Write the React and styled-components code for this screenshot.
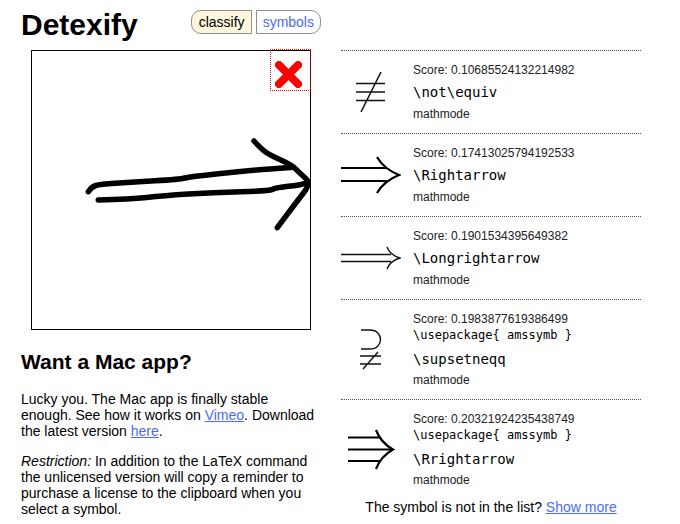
import React from "react";
import styled, { createGlobalStyle } from "styled-components";

const GlobalStyle = createGlobalStyle`
  html, body { margin: 0; padding: 0; background: #fff; }
  body { font-family: "Liberation Sans", Arial, sans-serif; color: #000; }
`;

const results = [
  { score: "0.10685524132214982", command: "\\not\\equiv", symbol: "notequiv", height: 83 },
  { score: "0.17413025794192533", command: "\\Rightarrow", symbol: "rightarrow", height: 83 },
  { score: "0.1901534395649382", command: "\\Longrightarrow", symbol: "longrightarrow", height: 83 },
  { score: "0.1983877619386499", pkg: "\\usepackage{ amssymb }", command: "\\supsetneqq", symbol: "supsetneqq", height: 100 },
  { score: "0.20321924235438749", pkg: "\\usepackage{ amssymb }", command: "\\Rrightarrow", symbol: "rrightarrow", height: 100 },
];

// hand drawn strokes on the canvas
const strokes = [
  [[56.3, 140.7], [59.7, 135.7], [68, 133.3], [98, 131.3], [148, 128.3], [158, 125.7], [214.7, 119.7], [261.3, 116.3]],
  [[66.3, 149], [98, 148.3], [131.3, 144.7], [181.3, 141.3], [236.3, 140], [244.7, 136.7], [268, 134], [279, 130.7]],
  [[222, 90], [229.7, 98.3], [238, 104], [259.7, 114], [268, 122.3], [279, 132.3], [264.7, 150.7], [245.3, 176.7]],
];

const smoothPath = (points) => {
  let d = `M${points[0][0]} ${points[0][1]}`;
  for (let i = 1; i < points.length - 1; i++) {
    const midX = (points[i][0] + points[i + 1][0]) / 2;
    const midY = (points[i][1] + points[i + 1][1]) / 2;
    d += `Q${points[i][0]} ${points[i][1]} ${midX} ${midY}`;
  }
  const last = points[points.length - 1];
  return `${d}L${last[0]} ${last[1]}`;
};

const symbols = {
  notequiv: (
    <svg width="30" height="40" viewBox="0 0 30 40">
      <path d="M0 11.500H29M0 20H29M0 28.500H29M25 0L5 40" fill="none" stroke="#111" strokeWidth="1.500" />
    </svg>
  ),
  rightarrow: (
    <svg width="60" height="38" viewBox="0 0 60 38">
      <path d="M0 12H46M0 25H46" fill="none" stroke="#000" strokeWidth="2" />
      <path d="M36 1C40 8 48 15 58 19C48 23 40 30 36 37" fill="none" stroke="#000" strokeWidth="2.200" />
    </svg>
  ),
  longrightarrow: (
    <svg width="60" height="24" viewBox="0 0 60 24">
      <path d="M0 8.500H50M0 15.500H50" fill="none" stroke="#111" strokeWidth="1.400" />
      <path d="M46 1C48 6 52 10 59 12C52 14 48 18 46 23" fill="none" stroke="#111" strokeWidth="1.400" />
    </svg>
  ),
  supsetneqq: (
    <svg width="22" height="41" viewBox="0 0 22 41">
      <path d="M1 1H10C17 1 20.500 6 20.500 10.500C20.500 15 17 20 10 20H1M0 27H21M0 35H21M18 23L3 40" fill="none" stroke="#111" strokeWidth="1.400" />
    </svg>
  ),
  rrightarrow: (
    <svg width="47" height="41" viewBox="0 0 47 41">
      <path d="M0 8.500H32M0 20.500H43M0 32H32" fill="none" stroke="#000" strokeWidth="2" />
      <path d="M28 1C31 9 37 16 45 20.500C37 25 31 32 28 40" fill="none" stroke="#000" strokeWidth="2.200" />
    </svg>
  ),
};

function App() {
  return (
    <>
      <GlobalStyle />
      <Page>
        <LeftColumn>
          <Header>
            <Title>Detexify</Title>
            <Tabs>
              <Tab $active $side="left">classify</Tab>
              <Tab $side="right">symbols</Tab>
            </Tabs>
          </Header>
          <Canvas>
            <svg width="278" height="278" viewBox="0 0 278 278">
              {strokes.map((points, i) => (
                <path
                  key={i}
                  d={smoothPath(points)}
                  fill="none"
                  stroke="#000"
                  strokeWidth="5.500"
                  strokeLinecap="round"
                  strokeLinejoin="round"
                />
              ))}
            </svg>
            <ClearButton>
              <svg width="27" height="27" viewBox="0 0 27 27">
                <path d="M4 4L23 23M23 4L4 23" stroke="#f00" strokeWidth="8" strokeLinecap="round" />
              </svg>
            </ClearButton>
          </Canvas>
          <Heading>Want a Mac app?</Heading>
          <Paragraph>
            Lucky you. The Mac app is finally stable enough. See how it works on <a href="#vimeo">Vimeo</a>. Download the latest version <a href="#here">here</a>.
          </Paragraph>
          <Paragraph>
            <em>Restriction:</em> In addition to the LaTeX command the unlicensed version will copy a reminder to purchase a license to the clipboard when you select a symbol.
          </Paragraph>
        </LeftColumn>
        <RightColumn>
          {results.map((result) => (
            <ResultRow key={result.command} $height={result.height}>
              <SymbolCell>{symbols[result.symbol]}</SymbolCell>
              <Details>
                <Small>Score: {result.score}</Small>
                {result.pkg && <Package>{result.pkg}</Package>}
                <Command $compact={!!result.pkg}>{result.command}</Command>
                <Small>mathmode</Small>
              </Details>
            </ResultRow>
          ))}
          <Footer>
            The symbol is not in the list? <a href="#more">Show more</a>
          </Footer>
        </RightColumn>
      </Page>
    </>
  );
}

const Page = styled.div`
  width: 680px;
  height: 524px;
  overflow: hidden;
  display: flex;
  align-items: flex-start;
  a { color: #4a6cf7; }
`;

const LeftColumn = styled.div`
  width: 298px;
  margin-left: 21px;
  flex-shrink: 0;
`;

const Header = styled.div`
  height: 50px;
  display: flex;
  align-items: flex-start;
`;

const Title = styled.h1`
  margin: 6px 0 0;
  font-size: 30px;
  line-height: 37px;
  font-weight: bold;
`;

const Tabs = styled.div`
  display: flex;
  gap: 4px;
  margin: 10px 0 0 53px;
`;

const Tab = styled.div`
  height: 24px;
  box-sizing: border-box;
  padding: 0 6px 0 ${(props) => (props.$active ? 7 : 6)}px;
  font-size: 14px;
  line-height: 22px;
  border: 1px solid #8f8f8f;
  color: ${(props) => (props.$active ? "#000" : "#4a6cf7")};
  background: ${(props) => (props.$active ? "#fff6dc" : "#fff")};
  border-radius: ${(props) => (props.$side === "left" ? "10px 0 0 10px" : "0 10px 10px 0")};
`;

const Canvas = styled.div`
  position: relative;
  width: 280px;
  height: 280px;
  box-sizing: border-box;
  margin-left: 10px;
  border: 1px solid #000;
  svg { display: block; }
`;

const ClearButton = styled.div`
  position: absolute;
  top: -2px;
  right: -1px;
  width: 41px;
  height: 42px;
  box-sizing: border-box;
  border: 1px dotted #f00;
  padding: 11px 0 0 4px;
`;

const Heading = styled.h2`
  margin: 20px 0 0;
  font-size: 21px;
  line-height: 24px;
  font-weight: bold;
`;

const Paragraph = styled.p`
  margin: 17px 0 0;
  font-size: 14px;
  line-height: 16px;
  width: 298px;
  &:last-child { margin-top: 14px; }
`;

const RightColumn = styled.div`
  width: 300px;
  margin: 50px 0 0 22px;
  flex-shrink: 0;
`;

const ResultRow = styled.div`
  height: ${(props) => props.$height}px;
  box-sizing: border-box;
  border-top: 1px dotted #555;
  display: flex;
  align-items: center;
`;

const SymbolCell = styled.div`
  width: 60px;
  flex-shrink: 0;
  display: flex;
  justify-content: center;
  svg { display: block; }
`;

const Details = styled.div`
  display: flex;
  flex-direction: column;
  align-self: flex-start;
  padding: 12px 0 0 12px;
`;

const Small = styled.div`
  font-size: 12px;
  line-height: 14px;
  color: #222;
`;

const Package = styled.div`
  font-family: "DejaVu Sans Mono", monospace;
  font-size: 12px;
  line-height: 18px;
`;

const Command = styled.div`
  font-family: "DejaVu Sans Mono", monospace;
  font-size: 14px;
  line-height: 16px;
  margin: 7px 0 ${(props) => (props.$compact ? 6 : 7)}px;
`;

const Footer = styled.div`
  text-align: center;
  font-size: 14px;
  line-height: 16px;
`;

export default App;
